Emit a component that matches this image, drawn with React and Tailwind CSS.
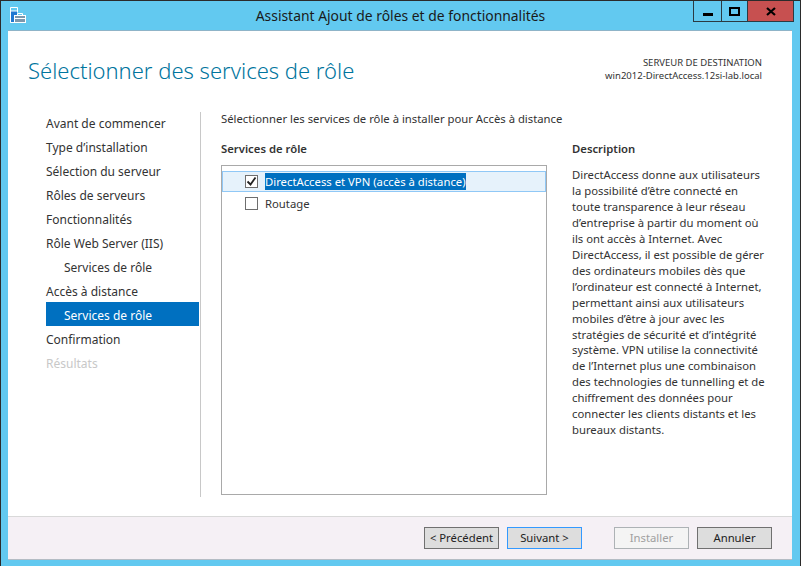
import React from 'react';

const FONT = "font-['Noto_Sans','Open_Sans',sans-serif]";

const NAV = [
  { label: 'Avant de commencer' },
  { label: "Type d’installation" },
  { label: 'Sélection du serveur' },
  { label: 'Rôles de serveurs' },
  { label: 'Fonctionnalités' },
  { label: 'Rôle Web Server (IIS)' },
  { label: 'Services de rôle', sub: true },
  { label: 'Accès à distance' },
  { label: 'Services de rôle', sub: true, active: true },
  { label: 'Confirmation' },
  { label: 'Résultats', disabled: true },
];

const DESCRIPTION = [
  'DirectAccess donne aux utilisateurs',
  'la possibilité d’être connecté en',
  'toute transparence à leur réseau',
  'd’entreprise à partir du moment où',
  'ils ont accès à Internet. Avec',
  'DirectAccess, il est possible de gérer',
  'des ordinateurs mobiles dès que',
  'l’ordinateur est connecté à Internet,',
  'permettant ainsi aux utilisateurs',
  'mobiles d’être à jour avec les',
  'stratégies de sécurité et d’intégrité',
  'système. VPN utilise la connectivité',
  'de l’Internet plus une combinaison',
  'des technologies de tunnelling et de',
  'chiffrement des données pour',
  'connecter les clients distants et les',
  'bureaux distants.',
];

function AppIcon() {
  return (
    <svg width="17" height="17" viewBox="0 0 17 17" className="ml-[9px] mt-[6px]">
      <path d="M0.5 15.5V0.5H7.5V5.5" fill="#62c9f0" stroke="#fff" />
      <rect x="1" y="4" width="6" height="12" fill="#1f78d1" />
      <path d="M1 4h6" stroke="#fff" />
      <path d="M0.5 4v11.5H4.5" fill="none" stroke="#fff" />
      <rect x="4.5" y="8.5" width="11" height="7" fill="#7d98ad" stroke="#fff" />
      <path d="M7.5 8V6.5h5V8" fill="none" stroke="#fff" />
      <path d="M5 11.5h10" stroke="#fff" />
    </svg>
  );
}

function WinButton({ w, red, children }) {
  return (
    <div className={`flex h-[21px] items-center justify-center border-b border-r border-[#2b3a42] ${w} ${red ? 'bg-[#c75050]' : ''}`}>
      {children}
    </div>
  );
}

function TitleBar() {
  return (
    <div className="relative flex h-[29px] shrink-0 items-start">
      <AppIcon />
      <div className="absolute left-0 top-[5px] w-full text-center text-[13.9px] leading-[20px] text-[#1a1a1a]">
        Assistant Ajout de rôles et de fonctionnalités
      </div>
      <div className="absolute right-[6px] top-0 flex border-l border-[#2b3a42]">
        <WinButton w="w-[28px]">
          <div className="mt-[7px] h-[3px] w-[10px] bg-black" />
        </WinButton>
        <WinButton w="w-[26px]">
          <div className="h-[9px] w-[11px] border-2 border-black" />
        </WinButton>
        <WinButton w="w-[46px]" red>
          <svg width="10" height="9" viewBox="0 0 10 9">
            <path d="M1 1l8 7M9 1L1 8" stroke="#000" strokeWidth="2.2" fill="none" />
          </svg>
        </WinButton>
      </div>
    </div>
  );
}

function Header() {
  return (
    <div className="flex h-[80px] shrink-0 items-start justify-between pl-[20px] pr-[30px]">
      <h1 className="mt-[21px] text-[22px] font-light leading-[36px] text-[#00759e]">
        Sélectionner des services de rôle
      </h1>
      <div className="mt-[25px] text-right text-[9.5px] leading-[13px] text-[#333]">
        <div>SERVEUR DE DESTINATION</div>
        <div>win2012-DirectAccess.12si-lab.local</div>
      </div>
    </div>
  );
}

function Nav() {
  return (
    <div className="ml-[38px] w-[153px] shrink-0">
      {NAV.map((item, i) => (
        <div
          key={i}
          className={`text-[12px] ${item.sub ? 'pl-[18px]' : ''} ${
            item.active
              ? '-mt-[2px] mb-[2px] h-[24px] bg-[#0070c0] leading-[28px] text-white'
              : item.disabled
                ? 'h-[24px] leading-[24px] text-[#c8c8c8]'
                : 'h-[24px] leading-[24px] text-[#333]'
          }`}
        >
          {item.label}
        </div>
      ))}
    </div>
  );
}

function Checkbox({ checked }) {
  return (
    <div className="flex h-[13px] w-[13px] shrink-0 items-center justify-center border border-[#6e6e6e] bg-white">
      {checked && (
        <svg width="11" height="11" viewBox="0 0 11 11">
          <path d="M1.5 5.5l3 3 5-7" stroke="#222" strokeWidth="1.8" fill="none" />
        </svg>
      )}
    </div>
  );
}

function RoleList() {
  return (
    <div className="mt-[8px] h-[330px] w-[326px] border border-[#a9a9a9] bg-white pt-[5px]">
      <div className="flex h-[21px] items-center border border-[#90c8f6] bg-[#e6f2fb] pl-[22px]">
        <Checkbox checked />
        <span className="ml-[7px] bg-[#0070c0] text-[11.3px] leading-[17px] text-white">
          DirectAccess et VPN (accès à distance)
        </span>
      </div>
      <div className="flex h-[21px] items-center pl-[23px] pt-[1px]">
        <Checkbox />
        <span className="ml-[7px] text-[11.3px] leading-[17px] text-[#333]">Routage</span>
      </div>
    </div>
  );
}

function Content() {
  return (
    <div className="ml-[1px] h-[385px] flex-1 border-l border-[#c8c8c8] pl-[20px]">
      <div className="text-[11.3px] leading-[14px] text-[#333]">
        Sélectionner les services de rôle à installer pour Accès à distance
      </div>
      <div className="mt-[15px] flex">
        <div className="w-[351px] shrink-0">
          <div className="text-[11.3px] font-semibold leading-[16px] text-[#333]">Services de rôle</div>
          <RoleList />
        </div>
        <div>
          <div className="text-[11.3px] font-semibold leading-[16px] text-[#333]">Description</div>
          <div className="mt-[10px] text-[11.3px] leading-[15.95px] text-[#333]">
            {DESCRIPTION.map((line, i) => (
              <div key={i} className="whitespace-nowrap">{line}</div>
            ))}
          </div>
        </div>
      </div>
    </div>
  );
}

function Button({ label, tone = 'normal', className = '' }) {
  const tones = {
    normal: 'border-[#707070] bg-[#dddddd] text-[#222]',
    focus: 'border-[#3399ff] bg-[#dddddd] text-[#222]',
    disabled: 'border-[#adb2b5] bg-[#f4f4f4] text-[#a0a0a0]',
  };
  return (
    <div className={`flex h-[22px] w-[75px] items-center justify-center border pt-[1px] text-[11.3px] ${tones[tone]} ${className}`}>
      {label}
    </div>
  );
}

function Footer() {
  return (
    <div className="flex h-[43px] shrink-0 items-start border-t border-[#d9d9d9] bg-[#f5f0f5] pl-[416px] pt-[10px]">
      <Button label="< Précédent" />
      <Button label="Suivant >" tone="focus" className="ml-[8px]" />
      <Button label="Installer" tone="disabled" className="ml-[32px]" />
      <Button label="Annuler" className="ml-[8px]" />
    </div>
  );
}

export default function App() {
  return (
    <div className={`${FONT} flex h-[566px] w-[801px] flex-col overflow-hidden border-l border-r border-t border-[#2b2b2b] bg-[#62c9f0]`}>
      <TitleBar />
      <div className="mx-[7px] flex h-[530px] w-[784px] flex-col border-b border-t border-b-[#b4bcc4] border-t-[#8fb4c8] bg-white">
        <Header />
        <div className="flex flex-1 pt-[1px]">
          <Nav />
          <Content />
        </div>
        <Footer />
      </div>
    </div>
  );
}
